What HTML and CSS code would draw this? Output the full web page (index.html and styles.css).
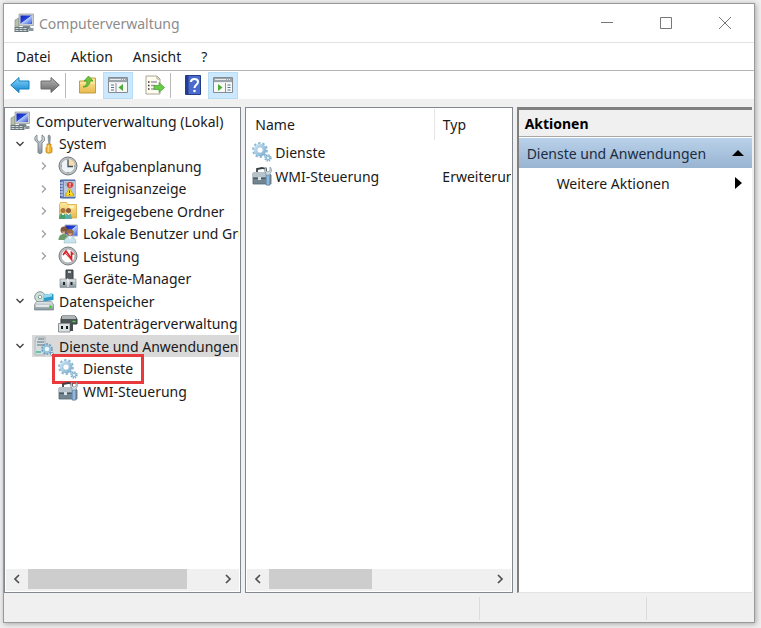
FILE: index.html
```html
<!DOCTYPE html>
<html lang="de">
<head>
  <meta charset="UTF-8">
  <meta name="viewport" content="width=device-width, initial-scale=1.0">
  <title>Computerverwaltung</title>
  <link rel="stylesheet" href="styles.css">
</head>
<body>
  <!-- Icons -->
  <svg class="icon-defs" aria-hidden="true">
    <defs>
      <linearGradient id="blue" x1="0" y1="0" x2="1" y2="1"><stop offset="0" stop-color="#1020b8"/><stop offset=".45" stop-color="#2444d8"/><stop offset=".5" stop-color="#b8ccff"/><stop offset="1" stop-color="#3458d8"/></linearGradient>
      <linearGradient id="metal" x1="0" y1="0" x2="0" y2="1"><stop offset="0" stop-color="#e4e9ec"/><stop offset="1" stop-color="#85929b"/></linearGradient>
      <linearGradient id="sky" x1="0" y1="0" x2="0" y2="1"><stop offset="0" stop-color="#8fd6fa"/><stop offset="1" stop-color="#0b83d2"/></linearGradient>
      <linearGradient id="gray" x1="0" y1="0" x2="0" y2="1"><stop offset="0" stop-color="#b8b8b8"/><stop offset="1" stop-color="#666"/></linearGradient>
      <linearGradient id="folder" x1="0" y1="0" x2="0" y2="1"><stop offset="0" stop-color="#ffeaa0"/><stop offset="1" stop-color="#e6b94d"/></linearGradient>
      <linearGradient id="gear" x1="0" y1="0" x2="1" y2="1"><stop offset="0" stop-color="#c8e3f4"/><stop offset="1" stop-color="#7eb0d2"/></linearGradient>
    </defs>
    <symbol id="computer" viewBox="0 0 20 20">
      <path d="M1 7l4-2v9H1z" fill="#b7c1a8" stroke="#7c8878" stroke-width=".6"/>
      <path d="M5 1h14.500v11.500H5z" fill="#c9ced3" stroke="#9299a0" stroke-width=".7"/>
      <path d="M6.500 2.500h11.500v8.500H6.500z" fill="url(#blue)"/>
      <path d="M9 13h7l1 3H8z" fill="#7f898f"/>
      <path d="M.5 14h14v5H.5z" fill="#68777c"/>
      <path d="M1.500 15.500h12M1.500 17.500h12" stroke="#d2d9dc" stroke-width="1" stroke-dasharray="3 1"/>
      <path d="M15 15h4.500v3H15z" fill="#8c979b"/>
    </symbol>
    <symbol id="tools" viewBox="0 0 20 20">
      <path d="M3 1v5l2.500 2L8 6V1c2 1 3 3 2.500 5.500L8 9v9c0 2-4 2-4 0V9L1.500 7C0 4.500 1 2 3 1z" fill="url(#metal)" stroke="#68747c" stroke-width=".8"/>
      <path d="M14.500 1h1l1 2-.7 7h-1l-.8-7z" fill="#8e999e" stroke="#6b777d" stroke-width=".5"/>
      <path d="M13 10h4v2.500l1 1V18c0 1.500-6 1.500-6 0v-4.500l1-1z" fill="#f4b42c" stroke="#b67a0d" stroke-width=".7"/>
      <path d="M14.300 11v7" stroke="#ffe396"/>
    </symbol>
    <symbol id="clock" viewBox="0 0 20 20">
      <circle cx="10" cy="10" r="9" fill="#bec3c5" stroke="#73797c"/>
      <circle cx="10" cy="10" r="7" fill="#edf3f7" stroke="#9aa1a5" stroke-width=".7"/>
      <path d="M10 10V3a7 7 0 0 1 7 7z" fill="#f7ddb0"/>
      <path d="M10 4v6.500h5" fill="none" stroke="#46525a" stroke-width="1.300"/>
      <path d="M10 3v1M10 16v1M3 10h1M16 10h1" stroke="#697983"/>
    </symbol>
    <symbol id="events" viewBox="0 0 20 20">
      <path d="M2.500 1h14.500v18H2.500z" fill="#7188b6" stroke="#415e9c"/>
      <path d="M6 2h11.500v16H6z" fill="#bac8dd"/>
      <path d="M7 4h9M7 6h9M7 15h9" stroke="#768ba9" stroke-width=".7"/>
      <path d="M2 4h3M2 7h3M2 10h3M2 13h3M2 16h3" stroke="#dce6ff"/>
      <circle cx="12" cy="6" r="3" fill="#d83a2d"/>
      <path d="M12 4v2.500M12 7.200v1" stroke="#fff" stroke-width="1"/>
      <path d="M11.500 9l4.500 8H7z" fill="#ffdf23" stroke="#c79612" stroke-width=".7"/>
      <path d="M11.500 11.500v2.500M11.500 15v1" stroke="#614b00"/>
    </symbol>
    <symbol id="shared" viewBox="0 0 20 20">
      <path d="M1.500 3.500l1-2h6l1 2h9V17H1.500z" fill="url(#folder)" stroke="#d6a83d" stroke-width=".8"/>
      <path d="M11 4.500h5v3h-5z" fill="#fff3bd"/>
      <circle cx="5" cy="9.500" r="2.500" fill="#a87543"/><circle cx="10.500" cy="9.500" r="2.500" fill="#925c38"/>
      <path d="M1 18c0-8 7-8 7 0z" fill="#45a06a"/><path d="M7 18c0-8 7-8 7 0z" fill="#5bada8"/>
      <path d="M4 12l1 2 1-2M9.500 12l1 2 1-2" stroke="#fff" fill="none"/>
    </symbol>
    <symbol id="users" viewBox="0 0 20 20">
      <path d="M7 1h12.500v11H7z" fill="url(#blue)" stroke="#aab3c4"/>
      <circle cx="6" cy="6" r="3.500" fill="#80583e"/><circle cx="12" cy="8.500" r="3.500" fill="#996a4a"/>
      <path d="M3.500 7.500h4L6 10z" fill="#dfb08b"/><path d="M10 9.500h4.500L12 12z" fill="#e1b28b"/>
      <path d="M.5 16c0-8 10-8 10 0z" fill="#6e9b69"/><path d="M6 19c0-9 12-9 12 0z" fill="#c6e3ed" stroke="#8eafbb" stroke-width=".5"/>
      <path d="M11 12l1 3 1.500-3" stroke="#fff" fill="none"/>
    </symbol>
    <symbol id="performance" viewBox="0 0 20 20">
      <circle cx="10" cy="10" r="9" fill="#bbbfc2" stroke="#777d80"/>
      <circle cx="10" cy="10" r="7" fill="#fff" stroke="#93999c" stroke-width=".7"/>
      <path d="M5 9l3-4 5.500 8V6.500l2 2" fill="none" stroke="#d7262b" stroke-width="1.700"/>
      <path d="M6 6l8 8.500" fill="none" stroke="#d7262b"/>
    </symbol>
    <symbol id="device" viewBox="0 0 20 20">
      <path d="M8 1h7v9H8z" fill="#565e62" stroke="#353b3f"/><path d="M10 2h3v2h-3z" fill="#c8cdcf"/>
      <path d="M2 10h16v8.500H2z" fill="url(#metal)" stroke="#8a9499" stroke-width=".7"/>
      <path d="M5 13h2v3H5zM12.500 13h2v3h-2z" fill="#1e282d"/><path d="M9 10h1v8" stroke="#fff" fill="none"/>
    </symbol>
    <symbol id="storage" viewBox="0 0 20 20">
      <circle cx="6" cy="6" r="5.300" fill="#cadfd7" stroke="#87989a"/><circle cx="6" cy="6" r="1.700" fill="#fff" stroke="#8da09d"/>
      <path d="M9 4l9-1.500 1.500 1V9L10 10.500z" fill="#2d9cc9"/><path d="M9 4l9-1.500v3L9.500 7z" fill="#92d9f1"/>
      <path d="M2.500 10.500h15l2 3v5.500H.5v-5.500z" fill="url(#metal)" stroke="#7a868c" stroke-width=".7"/>
      <path d="M2 15h13" stroke="#f3f6f7" stroke-width="1.500"/><circle cx="16.500" cy="16" r="1.200" fill="#38d529"/>
    </symbol>
    <symbol id="disk" viewBox="0 0 20 20">
      <path d="M4 2h13l2 3v5H3V5z" fill="#4d5558" stroke="#353d40"/><path d="M4 2h13l1.500 3H3.500z" fill="#aeb5b7"/>
      <path d="M14.500 7.500h3" stroke="#45dc40" stroke-width="1.300"/>
      <path d="M.5 9.500H12V18H.5z" fill="#dce0e1" stroke="#8c9395"/><path d="M12 10h3v7h-3z" fill="#454c4f"/>
      <path d="M3 12h2v3H3zM8 12h2v3H8z" fill="#111a1e"/>
    </symbol>
    <symbol id="gears" viewBox="0 0 20 20">
      <circle cx="8" cy="8" r="6.800" fill="none" stroke="#8db8d3" stroke-width="2.200" stroke-dasharray="2.400 1.870"/>
      <circle cx="8" cy="8" r="4.800" fill="none" stroke="url(#gear)" stroke-width="3"/><circle cx="8" cy="8" r="3.200" fill="#fff" stroke="#82b0ce" stroke-width=".7"/>
      <circle cx="16" cy="16" r="2.800" fill="none" stroke="#78a9c6" stroke-width="1.800" stroke-dasharray="1.300 .9"/>
      <circle cx="16" cy="16" r="1.700" fill="#fff" stroke="#8ebdd8" stroke-width="1.300"/>
    </symbol>
    <symbol id="services" viewBox="0 0 20 20">
      <path d="M2 1h9v18H1V5z" fill="#d4dddf" stroke="#9ba8ad" stroke-width=".7"/>
      <path d="M4 3h6M3 6h7M3 9h7" stroke="#617178" stroke-width="1.200"/>
      <path d="M2 16h5" stroke="#40b69e" stroke-width="1.500"/>
      <circle cx="13" cy="13" r="4.800" fill="none" stroke="#699cbd" stroke-width="2" stroke-dasharray="1.900 1.120"/>
      <circle cx="13" cy="13" r="3.300" fill="#eef6fa" stroke="#94c2dc" stroke-width="2"/>
      <circle cx="18" cy="18" r="1.500" fill="#fff" stroke="#6d9fbd"/>
    </symbol>
    <symbol id="wmi" viewBox="0 0 20 20">
      <path d="M5 6V3l5-1 4 1v4" fill="none" stroke="#383f43" stroke-width="1.800"/>
      <path d="M1 7h16l2 2v9H1z" fill="#718691" stroke="#52656e" stroke-width=".8"/><path d="M1 7h15v4H1z" fill="#b6c3ca"/>
      <path d="M1.500 12.500h14" stroke="#465964"/><path d="M6 11h3v3H6z" fill="#d8e1e4"/>
      <path d="M14 1v4l2 1 2-1V1c2 2 2 5 0 6v12h-4V7c-2-1-2-4 0-6z" fill="#d5e0e5" stroke="#7c8e98" stroke-width=".7"/>
      <path d="M14.500 9h3v10h-3z" fill="#8fb9df" stroke="#517fae" stroke-width=".6"/>
    </symbol>
    <symbol id="back" viewBox="0 0 20 20"><path d="M.7 10L9 2.500V6h10v8H9v3.500z" fill="url(#sky)" stroke="#197eb9"/></symbol>
    <symbol id="forward" viewBox="0 0 20 20"><path d="M19.300 10L11 2.500V6H1v8h10v3.500z" fill="url(#gray)" stroke="#6d6d6d"/></symbol>
    <symbol id="folder-up" viewBox="0 0 20 20">
      <path d="M1.500 6h7l2-3h7v15h-16z" fill="url(#folder)" stroke="#c79a43"/><path d="M2 8h15" stroke="#fff0ae"/>
      <path d="M5 12c3-1 4-3 4-6H6l4.500-5L15 6h-3c0 4-3 6.500-7 6z" fill="#6cc43a" stroke="#3d9924" stroke-width=".7"/>
    </symbol>
    <symbol id="pane-left" viewBox="0 0 20 20">
      <path d="M.5 2.500h19v15H.5z" fill="#f8f8f8" stroke="#858c92"/><path d="M1 3h18v4H1z" fill="#9ca4ab"/>
      <path d="M2 4.500h11M14 4.500h1M16 4.500h1M1 7.500h18" stroke="#e9edef"/>
      <path d="M8 8v9" stroke="#899096"/><path d="M3 10h3M3 12.500h3M3 15h3" stroke="#53718c"/>
      <path d="M15 9v7l-4.500-3.500z" fill="#4bad34"/>
    </symbol>
    <symbol id="pane-right" viewBox="0 0 20 20">
      <path d="M.5 2.500h19v15H.5z" fill="#f8f8f8" stroke="#858c92"/><path d="M1 3h18v4H1z" fill="#9ca4ab"/>
      <path d="M2 4.500h11M14 4.500h1M16 4.500h1M1 7.500h18" stroke="#e9edef"/>
      <path d="M12.500 8v9" stroke="#899096"/><path d="M14.500 10h3M14.500 12.500h3M14.500 15h3" stroke="#53718c"/>
      <path d="M5 9v7l4.500-3.500z" fill="#4bad34"/>
    </symbol>
    <symbol id="export" viewBox="0 0 20 20">
      <path d="M1 1h11l3 3v15H1z" fill="#fffdf0" stroke="#aaa696"/><path d="M12 1v3h3" fill="none" stroke="#aaa696"/>
      <path d="M3 7h1.500M3 10.500h1.500M3 14h1.500" stroke="#333" stroke-width="1.300"/><path d="M6 7h6M6 10.500h4M6 14h4" stroke="#a596b2" stroke-width="1.300"/>
      <path d="M9 10.500h5V7.500l5.500 5-5.500 5v-3H9z" fill="#68cb48" stroke="#39a026" stroke-width=".7"/>
    </symbol>
    <symbol id="help" viewBox="0 0 20 20">
      <path d="M2.500.5h15v19h-15z" fill="#4a6bcb" stroke="#233d87"/><path d="M3 1h2.500v18H3z" fill="#243f91"/>
      <path d="M8 7c0-4 7-4 7 0 0 2.800-3.500 2.800-3.500 6" fill="none" stroke="#fff" stroke-width="2"/><circle cx="11.500" cy="16" r="1.300" fill="#fff"/>
    </symbol>
    <symbol id="chevron" viewBox="0 0 10 10"><path d="M3 1.500L6.500 5 3 8.500" fill="none" stroke="currentColor" stroke-width="1.300"/></symbol>
    <symbol id="chevron-down" viewBox="0 0 10 10"><path d="M1.500 3L5 6.500 8.500 3" fill="none" stroke="currentColor" stroke-width="1.400"/></symbol>
    <symbol id="chevron-left" viewBox="0 0 10 10"><path d="M7 1L3 5l4 4" fill="none" stroke="currentColor" stroke-width="1.700"/></symbol>
    <symbol id="chevron-right" viewBox="0 0 10 10"><path d="M3 1l4 4-4 4" fill="none" stroke="currentColor" stroke-width="1.700"/></symbol>
  </svg>

  <div class="window">
    <header class="titlebar">
      <svg class="icon"><use href="#computer"/></svg>
      <h1>Computerverwaltung</h1>
      <div class="window-buttons">
        <button type="button" aria-label="Minimieren"><svg viewBox="0 0 12 12"><path d="M0 5.500h12"/></svg></button>
        <button type="button" aria-label="Maximieren"><svg viewBox="0 0 12 12"><path d="M.5.500h11v11H.5z"/></svg></button>
        <button type="button" aria-label="Schließen"><svg viewBox="0 0 12 12"><path d="M0 0l12 12M12 0L0 12"/></svg></button>
      </div>
    </header>

    <nav class="menubar">
      <button type="button">Datei</button>
      <button type="button">Aktion</button>
      <button type="button">Ansicht</button>
      <button type="button">?</button>
    </nav>

    <div class="toolbar">
      <button type="button" aria-label="Zurück"><svg class="icon"><use href="#back"/></svg></button>
      <button type="button" aria-label="Vorwärts"><svg class="icon"><use href="#forward"/></svg></button>
      <span class="separator"></span>
      <button type="button" aria-label="Nach oben"><svg class="icon"><use href="#folder-up"/></svg></button>
      <button type="button" class="active" aria-label="Konsolenstruktur"><svg class="icon"><use href="#pane-left"/></svg></button>
      <button type="button" class="export" aria-label="Liste exportieren"><svg class="icon"><use href="#export"/></svg></button>
      <span class="separator"></span>
      <button type="button" aria-label="Hilfe"><svg class="icon"><use href="#help"/></svg></button>
      <button type="button" class="active" aria-label="Aktionsbereich"><svg class="icon"><use href="#pane-right"/></svg></button>
    </div>

    <main class="panes">
      <section class="pane">
        <ul class="tree">
          <li class="root"><svg class="icon"><use href="#computer"/></svg><span>Computerverwaltung (Lokal)</span></li>
          <li class="group"><svg class="arrow"><use href="#chevron-down"/></svg><svg class="icon"><use href="#tools"/></svg><span>System</span></li>
          <li class="item"><svg class="arrow"><use href="#chevron"/></svg><svg class="icon"><use href="#clock"/></svg><span>Aufgabenplanung</span></li>
          <li class="item"><svg class="arrow"><use href="#chevron"/></svg><svg class="icon"><use href="#events"/></svg><span>Ereignisanzeige</span></li>
          <li class="item"><svg class="arrow"><use href="#chevron"/></svg><svg class="icon"><use href="#shared"/></svg><span>Freigegebene Ordner</span></li>
          <li class="item"><svg class="arrow"><use href="#chevron"/></svg><svg class="icon"><use href="#users"/></svg><span>Lokale Benutzer und Gruppen</span></li>
          <li class="item"><svg class="arrow"><use href="#chevron"/></svg><svg class="icon"><use href="#performance"/></svg><span>Leistung</span></li>
          <li class="item"><svg class="arrow"></svg><svg class="icon"><use href="#device"/></svg><span>Geräte-Manager</span></li>
          <li class="group"><svg class="arrow"><use href="#chevron-down"/></svg><svg class="icon"><use href="#storage"/></svg><span>Datenspeicher</span></li>
          <li class="item"><svg class="arrow"></svg><svg class="icon"><use href="#disk"/></svg><span>Datenträgerverwaltung</span></li>
          <li class="group selected"><svg class="arrow"><use href="#chevron-down"/></svg><svg class="icon"><use href="#services"/></svg><span>Dienste und Anwendungen</span></li>
          <li class="item marked"><svg class="arrow"></svg><svg class="icon"><use href="#gears"/></svg><span>Dienste</span></li>
          <li class="item"><svg class="arrow"></svg><svg class="icon"><use href="#wmi"/></svg><span>WMI-Steuerung</span></li>
        </ul>
        <div class="scrollbar">
          <button type="button" aria-label="Nach links"><svg><use href="#chevron-left"/></svg></button>
          <div class="track"><div class="thumb thumb-tree"></div></div>
          <button type="button" aria-label="Nach rechts"><svg><use href="#chevron-right"/></svg></button>
        </div>
      </section>

      <section class="pane">
        <div class="list">
          <table>
            <thead>
              <tr><th>Name</th><th>Typ</th></tr>
            </thead>
            <tbody>
              <tr><td><div class="entry"><svg class="icon"><use href="#gears"/></svg>Dienste</div></td><td></td></tr>
              <tr><td><div class="entry"><svg class="icon"><use href="#wmi"/></svg>WMI-Steuerung</div></td><td>Erweiterung</td></tr>
            </tbody>
          </table>
        </div>
        <div class="scrollbar">
          <button type="button" aria-label="Nach links"><svg><use href="#chevron-left"/></svg></button>
          <div class="track"><div class="thumb thumb-list"></div></div>
          <button type="button" aria-label="Nach rechts"><svg><use href="#chevron-right"/></svg></button>
        </div>
      </section>

      <aside class="actions">
        <h2>Aktionen</h2>
        <button type="button" class="actions-group">Dienste und Anwendungen<svg viewBox="0 0 12 12"><path d="M0 9l6-6 6 6z"/></svg></button>
        <button type="button" class="actions-more">Weitere Aktionen<svg viewBox="0 0 12 12"><path d="M3 0l7 6-7 6z"/></svg></button>
      </aside>
    </main>

    <footer class="statusbar"><span></span><span></span><span></span></footer>
  </div>
</body>
</html>
```
FILE: styles.css
```css
*,
*::after {
  box-sizing: border-box;
}

body {
  margin: 0;
  padding: 3px 6px 5px 3px;
  height: 100vh;
  background-color: #eee;
  font-family: "Noto Sans", "Open Sans", sans-serif;
  font-size: 14px;
  color: #1a1a1a;
}

button {
  padding: 0;
  border: none;
  background: none;
  font: inherit;
  color: inherit;
}

.icon-defs {
  position: absolute;
  width: 0;
  height: 0;
}

.icon {
  flex: none;
  width: 20px;
  height: 20px;
}

.window {
  display: flex;
  flex-direction: column;
  height: 100%;
  border: 1px solid #999;
  background-color: #f0f0f0;
  box-shadow: 1px 1px 5px rgba(0, 0, 0, 0.3);
}

.titlebar {
  display: flex;
  align-items: center;
  gap: 5px;
  height: 39px;
  padding-left: 10px;
  background-color: #fff;
  border-bottom: 1px solid #e2e2e2;
}

.titlebar h1 {
  flex: 1;
  margin: 0;
  font-size: 14px;
  font-weight: normal;
  color: #8c8c8c;
}

.window-buttons {
  display: flex;
}

.window-buttons button {
  display: flex;
  align-items: center;
  justify-content: center;
  width: 59px;
  height: 38px;
}

.window-buttons svg {
  width: 12px;
  height: 12px;
  fill: none;
  stroke: #777;
}

.menubar {
  display: flex;
  gap: 20px;
  height: 28px;
  padding-left: 12px;
  background-color: #fff;
  border-bottom: 1px solid #b4b4b4;
}

.toolbar {
  display: flex;
  align-items: center;
  height: 28px;
  padding-left: 1px;
  background-color: #fff;
}

.toolbar button {
  display: flex;
  align-items: center;
  justify-content: center;
  width: 30px;
  height: 27px;
}

.toolbar .active {
  background-color: #cce8ff;
  border: 1px solid #b9dcf5;
}

.toolbar .export {
  margin-left: 7px;
}

.separator {
  width: 1px;
  height: 25px;
  margin-right: 7px;
  background-color: #b8b8b8;
}

.panes {
  flex: 1;
  display: grid;
  grid-template-columns: 238fr 268fr 236fr;
  gap: 4px;
  min-height: 0;
  padding: 8px 2px 0 0;
}

.pane {
  display: flex;
  flex-direction: column;
  min-width: 0;
  padding: 1px;
  background-color: #fff;
  border: 1px solid #828790;
}

.tree {
  flex: 1;
  display: grid;
  grid-auto-rows: 22px 23px;
  align-content: start;
  margin: 0;
  padding: 1px 0;
  list-style: none;
  overflow: hidden;
}

.tree li {
  position: relative;
  display: flex;
  align-items: center;
  gap: 5px;
  white-space: nowrap;
}

.tree .root {
  padding-left: 4px;
  gap: 6px;
}

.tree .group {
  padding-left: 9px;
}

.tree .item {
  padding-left: 33px;
}

.tree .arrow {
  flex: none;
  width: 10px;
  height: 10px;
  color: #444;
}

.tree .item .arrow {
  color: #a0a0a0;
}

.tree .arrow + .icon {
  margin-left: 4px;
}

/* selection starts at the icon and leaves the arrow free */
.tree .selected {
  background: linear-gradient(to right, transparent 26px, #d9d9d9 26px);
}

/* red frame over the row */
.tree .marked::after {
  content: "";
  position: absolute;
  top: -3px;
  left: 46px;
  width: 92px;
  height: 30px;
  border: 3px solid #e8393d;
}

.list {
  flex: 1;
  overflow: hidden;
}

table {
  width: 330px;
  table-layout: fixed;
  border-collapse: collapse;
}

th,
td {
  height: 24px;
  padding: 0 8px;
  font-weight: normal;
  text-align: left;
}

th {
  height: 31px;
}

th:first-child {
  width: 187px;
  border-right: 1px solid #e5e5e5;
}

td:first-child {
  padding-left: 5px;
}

.entry {
  display: flex;
  align-items: center;
  gap: 3px;
}

.scrollbar {
  display: flex;
  height: 22px;
  padding-bottom: 2px;
  background-color: #f0f0f0;
}

.scrollbar button {
  display: flex;
  align-items: center;
  justify-content: center;
  width: 22px;
  color: #505050;
}

.scrollbar svg {
  width: 10px;
  height: 10px;
}

.track {
  flex: 1;
}

.thumb {
  height: 100%;
  background-color: #cdcdcd;
}

.thumb-tree {
  width: 84%;
}

.thumb-list {
  width: 47%;
}

.actions {
  display: flex;
  flex-direction: column;
  min-width: 0;
  background-color: #fff;
  border-top: 3px solid #808080;
  border-left: 2px solid #808080;
  border-bottom: 1px solid #e3e3e3;
}

.actions h2 {
  margin: 0;
  padding: 0 6px;
  height: 27px;
  border-bottom: 1px solid #a8a8a8;
  background-color: #f0f0f0;
  font-size: 14px;
  line-height: 28px;
  color: #000;
}

.actions button {
  display: flex;
  align-items: center;
  justify-content: space-between;
  height: 30px;
  padding: 0 8px;
}

.actions svg {
  width: 12px;
  height: 12px;
  fill: #000;
}

.actions .actions-group {
  margin-top: 1px;
  background: linear-gradient(#b9d1ea, #99b4d1);
  color: #1b2c42;
}

.actions .actions-more {
  padding-left: 38px;
}

.statusbar {
  display: grid;
  grid-template-columns: 475fr 167fr 108fr;
  height: 29px;
  padding: 4px 0 2px;
}

.statusbar span + span {
  border-left: 1px solid #dcdcdc;
}
```
